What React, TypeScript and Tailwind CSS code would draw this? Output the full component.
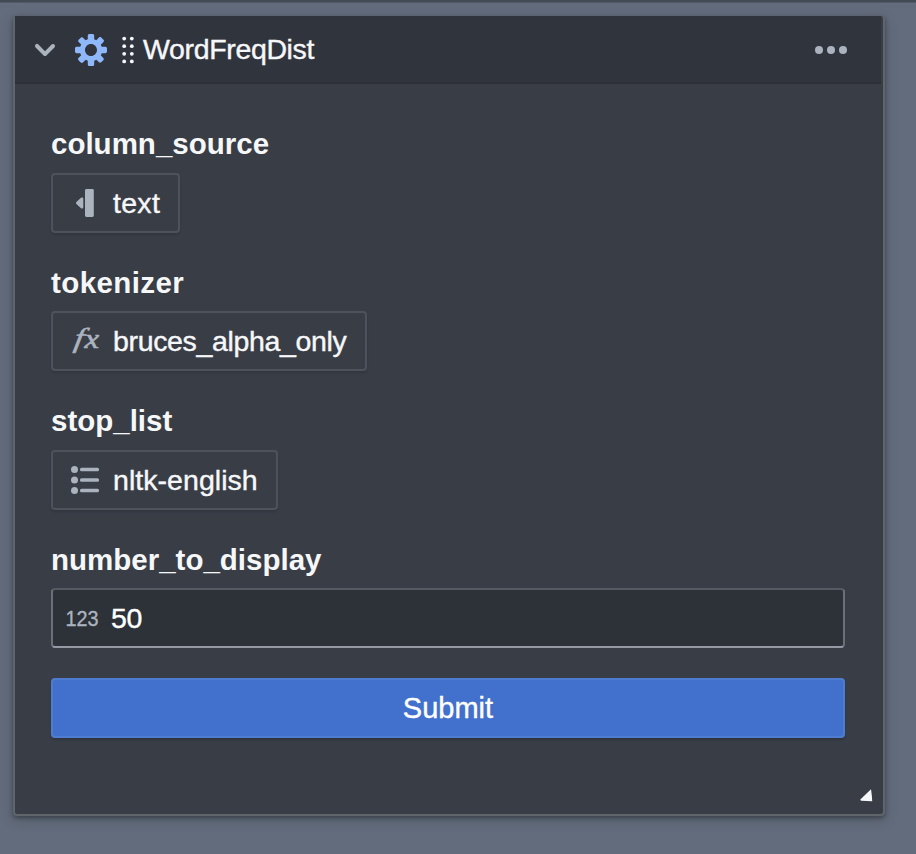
import type { ReactNode } from "react";

function Field({ label, labelClass, icon, value, valueClass, boxClass, className }: {
  label: string; labelClass: string; icon: ReactNode; value: string; valueClass: string; boxClass: string; className: string;
}) {
  return (
    <div className={className}>
      <div className={`h-9 whitespace-nowrap text-[29.5px] leading-9 font-bold ${labelClass}`}>{label}</div>
      <button className={`mt-[11px] flex h-[60px] items-center rounded-[4px] border-2 border-[#4d525b] pl-4 shadow-[0_2px_2px_rgba(17,20,24,0.15)] ${boxClass}`}>
        {icon}
        <span className={`ml-3 whitespace-nowrap leading-9 [-webkit-text-stroke:0.4px] ${valueClass}`}>{value}</span>
      </button>
    </div>
  );
}

const Chevron = () => (
  <svg className="size-8 shrink-0 fill-[#abb3bf]" viewBox="0 0 16 16">
    <path d="M12 5c-.28 0-.53.11-.71.29L8 8.59l-3.29-3.3a1.003 1.003 0 00-1.42 1.42l4 4c.18.18.43.29.71.29s.53-.11.71-.29l4-4A1.003 1.003 0 0012 5z" />
  </svg>
);

const Cog = () => (
  <svg className="ml-3.5 size-8 shrink-0 fill-[#8fb8fa]" viewBox="0 0 16 16">
    <path fillRule="evenodd" d="M15.19 6.39h-1.85c-.11-.37-.27-.71-.45-1.04l1.36-1.36c.31-.31.31-.82 0-1.13l-1.13-1.13c-.31-.31-.82-.31-1.13 0l-1.36 1.36c-.33-.17-.67-.33-1.04-.44V.79c0-.44-.36-.8-.8-.8h-1.6c-.44 0-.8.36-.8.8v1.86c-.39.12-.75.28-1.1.47l-1.3-1.3c-.3-.3-.79-.3-1.09 0L1.82 2.91c-.3.3-.3.79 0 1.09l1.3 1.3c-.2.34-.36.7-.48 1.09H.79c-.44 0-.8.36-.8.8v1.6c0 .44.36.8.8.8h1.85c.11.37.27.71.45 1.04l-1.36 1.36c-.31.31-.31.82 0 1.13l1.13 1.13c.31.31.82.31 1.13 0l1.36-1.36c.33.18.67.33 1.04.44v1.86c0 .44.36.8.8.8h1.6c.44 0 .8-.36.8-.8v-1.86c.39-.12.75-.28 1.1-.47l1.3 1.3c.3.3.79.3 1.09 0l1.09-1.09c.3-.3.3-.79 0-1.09l-1.3-1.3c.19-.35.36-.71.48-1.1h1.85c.44 0 .8-.36.8-.8v-1.6a.816.816 0 00-.81-.79zm-7.2 4.6c-1.66 0-3-1.34-3-3s1.34-3 3-3 3 1.34 3 3-1.34 3-3 3z" />
  </svg>
);

const Grip = () => (
  <svg className="ml-[13px] h-8 w-4 shrink-0 fill-[#f6f7f9]" viewBox="120 34 16 32">
    {[38.6, 46.2, 53.8, 61.4].map((y) => (
      <g key={y}>
        <circle cx="124.2" cy={y} r="1.9" />
        <circle cx="131.8" cy={y} r="1.9" />
      </g>
    ))}
  </svg>
);

const More = () => (
  <svg className="mr-[34px] ml-auto size-8 fill-[#abb3bf]" viewBox="0 0 16 16">
    <circle cx="2" cy="8" r="2" />
    <circle cx="8" cy="8" r="2" />
    <circle cx="14" cy="8" r="2" />
  </svg>
);

const ColumnIcon = () => (
  <svg className="size-8 shrink-0 fill-[#abb3bf]" viewBox="69 187 32 32">
    <rect x="85" y="189" width="8.8" height="28" rx="1.4" />
    <path d="M76.4 202.1 81 197.8c.9-.8 2.3-.2 2.3 1v8.4c0 1.2-1.4 1.8-2.3 1L76.4 203.9c-.5-.5-.5-1.3 0-1.8z" />
  </svg>
);

const FunctionIcon = () => (
  <svg className="size-8 shrink-0 overflow-visible fill-[#abb3bf] stroke-[#abb3bf] stroke-[0.6]" viewBox="69 325 32 32" fontStyle="italic" fontFamily="'Liberation Serif', serif">
    <text transform="translate(73.2 347.3) skewX(-10) scale(1.2 0.98)" fontSize="28">f</text>
    <text transform="translate(84.4 347.6) scale(1.18 1)" fontSize="28">x</text>
  </svg>
);

const ListIcon = () => (
  <svg className="size-8 shrink-0 fill-[#abb3bf]" viewBox="69 464 32 32">
    {[469.5, 480, 490.5].map((y) => (
      <g key={y}>
        <circle cx="74.5" cy={y} r="3.5" />
        <rect x="80" y={y - 1.75} width="19" height="3.5" rx="1.5" />
      </g>
    ))}
  </svg>
);

export default function App() {
  return (
    <div className="h-[854px] w-[916px] overflow-hidden bg-[#636c7c] font-['Liberation_Sans',Arial,sans-serif] text-[#f6f7f9]">
      <div className="h-[3px] border-b border-[#515a66] bg-[#424a54]" />
      <div className="mt-[13px] ml-[13px] flex h-[800px] w-[872px] flex-col rounded-[4px] border-x-2 border-b-2 border-[#60646b] bg-[#393d46] shadow-[0_2px_4px_rgba(17,20,24,0.4),0_4px_14px_rgba(17,20,24,0.18)]">
        <header className="mr-0.5 flex h-[68px] shrink-0 items-center border-b-2 border-[#2d3037] bg-[#30343c] pt-0.5 pl-3.5">
          <Chevron />
          <Cog />
          <Grip />
          <h1 className="ml-[7px] pb-0.5 text-[28.5px] leading-9 tracking-[-0.35px] whitespace-nowrap [-webkit-text-stroke:0.4px]">WordFreqDist</h1>
          <More />
        </header>
        <main className="flex grow flex-col pt-[42px] pr-[38px] pl-9">
          <Field className="h-[138px]" label="column_source" labelClass="tracking-[0px]" icon={<ColumnIcon />} value="text" valueClass="text-[28.5px] tracking-[0.3px]" boxClass="w-[129px]" />
          <Field className="h-[139px]" label="tokenizer" labelClass="pt-px tracking-[0.4px]" icon={<FunctionIcon />} value="bruces_alpha_only" valueClass="text-[28.5px] tracking-[-0.35px]" boxClass="w-[316px]" />
          <Field className="h-[138px]" label="stop_list" labelClass="tracking-[0px]" icon={<ListIcon />} value="nltk-english" valueClass="text-[28.5px] tracking-[0.05px]" boxClass="w-[227px]" />
          <div className="h-9 pt-px text-[29.5px] leading-9 font-bold whitespace-nowrap">number_to_display</div>
          <div className="mt-[11px] flex h-[60px] shrink-0 items-center rounded-[4px] border-2 border-[#6b6f77] border-t-[#565a62] border-b-[#9599a3] bg-[#2d3138] pl-[13px]">
            <svg className="h-8 w-8 shrink-0 overflow-visible fill-[#abb3bf] stroke-[#abb3bf] stroke-[0.4]" viewBox="66 602 32 32">
              <text x="65.5" y="626" fontSize="22.5" textLength="33" lengthAdjust="spacingAndGlyphs">123</text>
            </svg>
            <span className="ml-[13px] text-[28.5px] leading-9 tracking-[-0.3px] text-white [-webkit-text-stroke:0.4px]">50</span>
          </div>
          <button className="mt-[30px] h-[60px] shrink-0 rounded-[4px] border-2 border-[#4e7dd0] bg-[#4170cd] text-[29px] leading-9 text-white shadow-[0_2px_2px_rgba(17,20,24,0.2)] [-webkit-text-stroke:0.4px]">Submit</button>
          <svg className="mt-auto mr-[-29px] mb-3 size-[14px] self-end fill-[#f6f7f9]" viewBox="860 788 14 14">
            <path d="M860.3 799.5 871 789.3Q872 796 872.2 801.2L861 800.7Z" />
          </svg>
        </main>
      </div>
    </div>
  );
}
